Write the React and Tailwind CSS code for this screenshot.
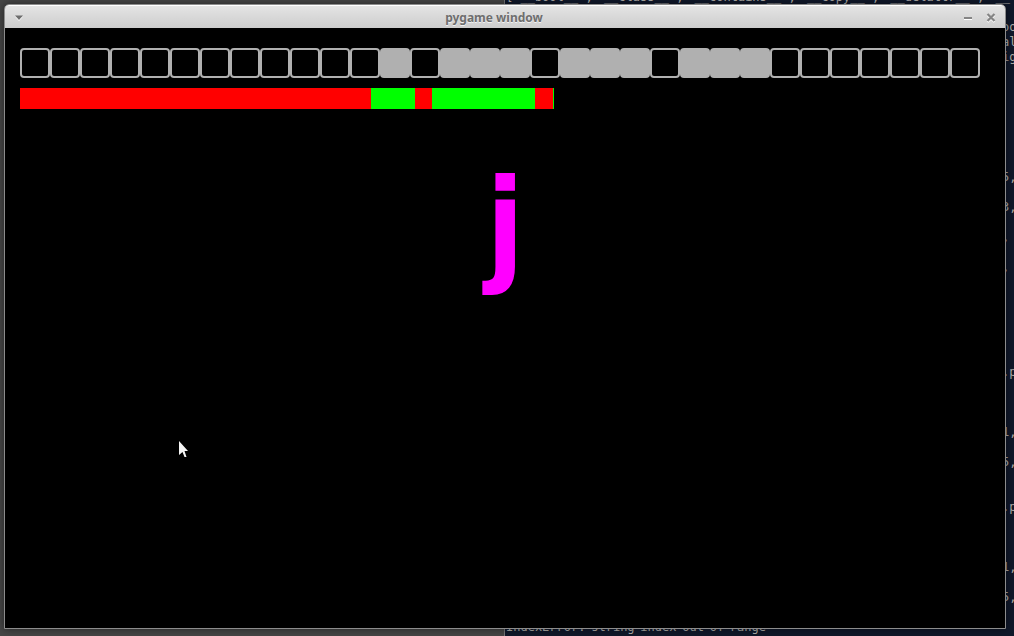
const CELLS = '00000000000010111011101110000000'.split('');

const SEGMENTS = [
  { hit: false, width: 351 },
  { hit: true, width: 44 },
  { hit: false, width: 17 },
  { hit: true, width: 103 },
  { hit: false, width: 18 },
  { hit: true, width: 1 },
];

const NAMES = ["['__bool__',", "'__class__',", "'__contains__',", "'__copy__',", "'__delattr__',", "'__"];

const LINE_ENDS = [
  '  \'', 'oo', 'al', 'ig', '  \'', '', '', '', '', '', '',
  '5,', '', '3,', '', ', ', '', ', ', '', '', '', '', '', '',
  '.p', '', '', '', '1,', '', '5,', '', '', '.p', '', '', '', '1,', '', '5,', '',
];

function Terminal() {
  return (
    <div
      aria-hidden="true"
      className="absolute inset-y-0 right-0 left-[504px] overflow-hidden border-l border-[#77777a] bg-[#10182a] font-['DejaVu_Sans_Mono',monospace] text-xs leading-[15px] whitespace-pre text-[#b0aeaa]"
    >
      <div className="-mt-[10px] flex h-[15px] justify-between pr-1 pl-px">
        {NAMES.map((name) => (
          <span key={name}>{name}</span>
        ))}
      </div>
      {LINE_ENDS.map((text, i) => (
        <div key={i} className="flex h-[15px] justify-end">
          <span className="w-3">{text}</span>
        </div>
      ))}
      <div className="flex w-[261px] justify-between pl-px">
        {['IndexError:', 'string', 'index', 'out', 'of', 'range'].map((word) => (
          <span key={word}>{word}</span>
        ))}
      </div>
    </div>
  );
}

function TitleBar() {
  return (
    <header className="flex h-[23px] shrink-0 items-center justify-between rounded-t border-t border-white bg-linear-to-b from-[#e4e4e4] to-[#cdcdcd] px-2 pt-px">
      <button type="button" aria-label="Window menu" className="flex w-10 items-center">
        <svg width="12" height="8" viewBox="0 0 12 8">
          <path d="M2 2.5h8L6 7z" fill="#fff" />
          <path d="M2 1.5h8L6 6z" fill="#6e6e6e" />
        </svg>
      </button>
      <h1 className="font-['Noto_Sans','Open_Sans',sans-serif] text-xs font-bold text-[#6e6e6e] text-shadow-[0_1px_0_#f2f2f2]">
        pygame window
      </h1>
      <div className="flex w-[62px] items-center justify-end gap-3">
        <button type="button" aria-label="Minimize">
          <svg width="9" height="10" viewBox="0 0 9 10">
            <path d="M0 5h8v2H0z" fill="#fff" />
            <path d="M0 4h8v2H0z" fill="#858585" />
          </svg>
        </button>
        <button type="button" aria-label="Close">
          <svg width="12" height="10" viewBox="0 0 12 10" fill="none" strokeWidth="2.2">
            <path d="M2.5 2l7 7M9.5 2l-7 7" stroke="#fff" />
            <path d="M2.5 1l7 7M9.5 1l-7 7" stroke="#858585" />
          </svg>
        </button>
      </div>
    </header>
  );
}

export default function App() {
  return (
    <div className="relative flex h-screen overflow-hidden bg-[#464646] pt-1 pr-2 pb-[7px] pl-1">
      <Terminal />
      <section className="relative flex min-w-0 flex-1 flex-col rounded-t-[5px] border border-[#8c8c8c] bg-black shadow-[0_0_9px_rgba(0,0,0,0.5)]">
        <TitleBar />
        <main className="flex-1 px-[15px] pt-5">
          <div className="flex">
            {CELLS.map((on, i) => (
              <div
                key={i}
                className={
                  on === '1'
                    ? 'size-[30px] rounded-sm bg-[#b0b0b0]'
                    : 'size-[30px] rounded-sm border-2 border-[#b0b0b0]'
                }
              />
            ))}
          </div>
          <div className="mt-[10px] flex h-[21px]">
            {SEGMENTS.map((s, i) => (
              <div key={i} className={s.hit ? 'bg-[#00ff00]' : 'bg-[#ff0000]'} style={{ width: s.width }} />
            ))}
          </div>
          <p className="mt-[41px] text-center font-['DejaVu_Sans_Condensed','DejaVu_Sans',sans-serif] text-[124px] leading-[150px] font-bold font-stretch-condensed text-[#ff00ff]">
            j
          </p>
        </main>
      </section>
      <svg className="absolute top-[441px] left-[178px]" width="12" height="18" viewBox="0 0 12 18" aria-hidden="true">
        <path d="M1 0v14l3.5-3 2 5h2L6.5 10H10z" fill="#f5f5f5" />
      </svg>
    </div>
  );
}
